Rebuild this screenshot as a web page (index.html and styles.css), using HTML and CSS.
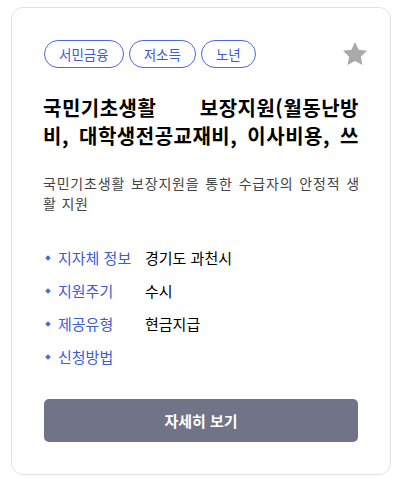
FILE: index.html
```html
<!DOCTYPE html>
<html lang="ko">
<head>
  <meta charset="UTF-8" />
  <meta name="viewport" content="width=device-width, initial-scale=1.0"/>
  <title>복지서비스 카드</title>
  <link rel="stylesheet" href="styles.css">
</head>
<body>
  <div class="card">
    <div class="card-head">
      <div class="tags">
        <span class="tag">서민금융</span>
        <span class="tag">저소득</span>
        <span class="tag">노년</span>
      </div>
      <button class="star" aria-label="관심 등록">
        <svg width="28" height="28" viewBox="0 0 24 24">
          <path d="M12 1.8l3.1 6.6 7.2.9-5.3 5 1.4 7.1L12 17.9l-6.4 3.5 1.4-7.1-5.3-5 7.2-.9z" fill="#aaaaaa"/>
        </svg>
      </button>
    </div>

    <h2 class="title">국민기초생활 보장지원(월동난방<br>비, 대학생전공교재비, 이사비용, 쓰<br>레기봉투, 장제비 등)</h2>

    <p class="desc">국민기초생활 보장지원을 통한 수급자의 안정적 생활 지원</p>

    <ul class="info">
      <li><span class="label">지자체 정보</span><span class="value">경기도 과천시</span></li>
      <li><span class="label">지원주기</span><span class="value">수시</span></li>
      <li><span class="label">제공유형</span><span class="value">현금지급</span></li>
      <li><span class="label">신청방법</span><span class="value"></span></li>
    </ul>

    <button class="btn-detail">자세히 보기</button>
  </div>
</body>
</html>
```

FILE: styles.css
```css
body {
  margin: 0;
  padding: 7px 10px 3px 11px;
  font-family: "Noto Sans CJK KR", "Noto Sans", sans-serif;
  background: #ffffff;
}

.card {
  width: 380px;
  box-sizing: border-box;
  border: 1px solid #e2e2e2;
  border-radius: 12px;
  padding: 32px 32px 32px 32px;
  background: #fff;
}

.card-head {
  display: flex;
  justify-content: space-between;
  align-items: center;
  height: 28px;
}

.tags {
  display: flex;
  gap: 5px;
}

.tag {
  height: 28px;
  box-sizing: border-box;
  padding: 0 14px;
  border: 1px solid #4a68e0;
  border-radius: 14px;
  color: #3d5bd8;
  font-size: 13.5px;
  line-height: 26px;
}

.star {
  border: none;
  background: none;
  padding: 0;
  margin-right: -11px;
  display: flex;
  cursor: pointer;
}

/* 제목은 두 줄까지만, 양쪽 정렬 */
.title {
  margin: 26px -1px 0 -1px;
  font-size: 20px;
  font-weight: 700;
  line-height: 28px;
  letter-spacing: 0.5px;
  color: #000;
  text-align: justify;
  text-align-last: justify;
  word-break: break-all;
  height: 56px;
  overflow: hidden;
}

.desc {
  margin: 23px -2px 0 -1px;
  font-size: 14px;
  line-height: 20px;
  letter-spacing: 0.8px;
  color: #444;
  text-align: justify;
  word-break: break-all;
}

.info {
  list-style: none;
  margin: 28px 0 0;
  padding: 0;
}

.info li {
  display: flex;
  align-items: center;
  height: 33px;
  font-size: 15px;
}

.info li::before {
  content: "";
  width: 4px;
  height: 4px;
  background: #4a68e0;
  transform: rotate(45deg);
  margin: 0 8px 0 2px;
}

.label {
  width: 87px;
  color: #3d5bd8;
}

.value {
  color: #000;
}

.btn-detail {
  display: block;
  width: 100%;
  height: 43px;
  margin-top: 26px;
  border: none;
  border-radius: 5px;
  background: #717386;
  color: #fff;
  font-family: inherit;
  font-size: 15px;
  font-weight: 700;
  cursor: pointer;
}
```
